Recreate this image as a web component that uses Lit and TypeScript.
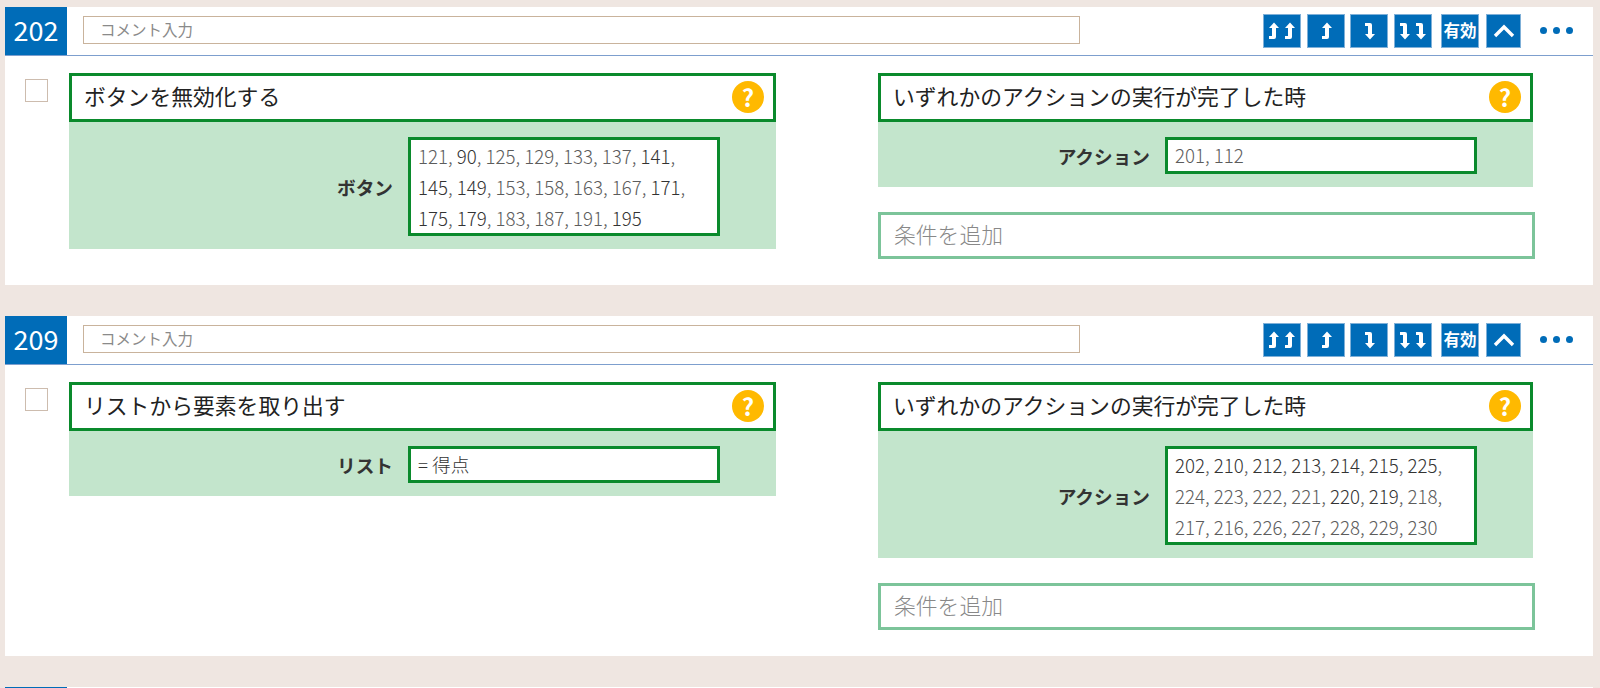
import { LitElement, html, css, svg } from "lit";
import { customElement } from "lit/decorators.js";

const up = (x: number) => svg`<path d="M${x - 5} 8 L${x} 2.5 L${x + 5} 8 H${x + 2} V17 a2 2 0 0 1 -2 2 H${x - 5} v-3 H${x - 2} V8 Z" fill="#fff"/>`;
const down = (x: number) => svg`<path d="M${x - 5} 14 L${x} 19.5 L${x + 5} 14 H${x + 2} V5 a2 2 0 0 0 -2 -2 H${x - 5} v3 H${x - 2} V14 Z" fill="#fff"/>`;

const icons = [
  svg`${up(11)}${up(27)}`,
  svg`${up(20)}`,
  svg`${down(20)}`,
  svg`${down(11)}${down(27)}`,
];

const dark = new Set(["90", "141", "145", "149", "171", "175", "179", "195", "202", "210", "212", "213", "214", "215", "225", "220", "219"]);

interface Field { label: string; lines: string[]; }
interface Clause { title: string; field: Field; }
interface Block { id: string; left: Clause; right: Clause; }

const blocks: Block[] = [
  {
    id: "202",
    left: {
      title: "ボタンを無効化する",
      field: {
        label: "ボタン",
        lines: [
          "121, 90, 125, 129, 133, 137, 141,",
          "145, 149, 153, 158, 163, 167, 171,",
          "175, 179, 183, 187, 191, 195",
        ],
      },
    },
    right: {
      title: "いずれかのアクションの実行が完了した時",
      field: { label: "アクション", lines: ["201, 112"] },
    },
  },
  {
    id: "209",
    left: {
      title: "リストから要素を取り出す",
      field: { label: "リスト", lines: ["= 得点"] },
    },
    right: {
      title: "いずれかのアクションの実行が完了した時",
      field: {
        label: "アクション",
        lines: [
          "202, 210, 212, 213, 214, 215, 225,",
          "224, 223, 222, 221, 220, 219, 218,",
          "217, 216, 226, 227, 228, 229, 230",
        ],
      },
    },
  },
];

@customElement("app-root")
export class AppRoot extends LitElement {
  static styles = css`
    :host {
      display: block;
      height: 688px;
      overflow: hidden;
      background: #efe6e1;
      padding: 7px 7px 0 5px;
      box-sizing: border-box;
      font-family: "Noto Sans CJK JP", "Noto Sans", sans-serif;
      color: #222;
    }
    .card { background: #fff; margin-bottom: 31px; padding-bottom: 26px; }
    .head {
      height: 49px;
      box-sizing: border-box;
      border-bottom: 1px solid #7d9fce;
      display: flex;
      align-items: flex-start;
    }
    .num {
      width: 62px;
      height: 48px;
      box-sizing: border-box;
      padding-bottom: 3px;
      background: #006cb8;
      color: #fff;
      font-size: 27px;
      display: flex;
      align-items: center;
      justify-content: center;
    }
    .comment {
      margin: 9px 0 0 16px;
      width: 997px;
      height: 28px;
      box-sizing: border-box;
      border: 1px solid #c9b39c;
      padding-left: 16px;
      font-size: 15.5px;
      line-height: 25px;
      color: #8a8a8a;
    }
    .tools { display: flex; margin: 7px 0 0 183px; align-items: flex-start; }
    .btn {
      width: 38px;
      height: 34px;
      margin-right: 5.5px;
      background: #006cb8;
      box-sizing: border-box;
      border: 1px solid #7fb0d8;
      display: flex;
      align-items: center;
      justify-content: center;
      color: #fff;
      font-size: 16.5px;
      font-weight: 700;
      padding-bottom: 2px;
    }
    .btn svg { width: 38px; height: 22px; flex: none; margin-top: 2px; }
    .btn.en { margin-left: 4px; margin-right: 7px; white-space: nowrap; }
    .btn.ch { width: 35px; margin-right: 19px; }
    .btn.ch svg { width: 22px; height: 14px; }
    .dots { display: flex; gap: 6px; margin-top: 13px; }
    .dots i { width: 7px; height: 7px; border-radius: 50%; background: #006cb8; display: block; }
    .body { display: flex; padding-top: 17px; }
    .check {
      width: 23px;
      height: 23px;
      box-sizing: border-box;
      border: 1px solid #cdbcae;
      margin: 6px 21px 0 20px;
      flex: none;
    }
    .col { flex: none; }
    .col.l { width: 707px; }
    .col.r { width: 655px; margin-left: 102px; }
    .title {
      height: 49px;
      box-sizing: border-box;
      border: 3px solid #0a8a2c;
      background: #fff;
      display: flex;
      align-items: center;
      justify-content: space-between;
      padding: 0 9px 0 12px;
      font-size: 21.8px;
    }
    .t { padding-bottom: 4px; }
    .q {
      width: 32px;
      height: 32px;
      margin-top: -1px;
      border-radius: 50%;
      background: #ffb900;
      color: #fff;
      font-weight: 700;
      font-size: 24px;
      line-height: 32px;
      text-align: center;
    }
    .fields {
      background: #c3e5cc;
      display: flex;
      justify-content: flex-end;
      align-items: center;
      padding: 15px 0 13px;
    }
    .label { font-size: 18.67px; font-weight: 700; margin-right: 15px; color: #333; }
    .val {
      width: 312px;
      box-sizing: border-box;
      border: 3px solid #0a8a2c;
      background: #fff;
      padding: 0 7px;
      font-size: 18.67px;
      font-weight: 300;
      line-height: 31px;
      color: #5c5c5c;
      white-space: nowrap;
      margin-right: 56px;
    }
    .val.one { line-height: 29px; padding-bottom: 2px; }
    .val b { font-weight: inherit; color: #333; }
    .add {
      margin-top: 25px;
      width: 657px;
      height: 47px;
      box-sizing: border-box;
      border: 3px solid #7cc49a;
      padding-left: 13px;
      font-size: 21.8px;
      line-height: 37px;
      font-weight: 300;
      color: #888;
      background: #fff;
    }
  `;

  private line(l: string) {
    if (!/^\d/.test(l)) return html`<div><b>${l}</b></div>`;
    const parts = l.split(/(\d+)/);
    return html`<div>${parts.map((p) => (dark.has(p) ? html`<b>${p}</b>` : p))}</div>`;
  }

  private clause(c: Clause) {
    return html`
      <div class="title"><span class="t">${c.title}</span><span class="q">?</span></div>
      <div class="fields">
        <span class="label">${c.field.label}</span>
        <div class="val ${c.field.lines.length === 1 ? "one" : ""}">${c.field.lines.map((l) => this.line(l))}</div>
      </div>`;
  }

  render() {
    return html`${blocks.map(
      (b) => html`
        <section class="card">
          <div class="head">
            <div class="num">${b.id}</div>
            <div class="comment">コメント入力</div>
            <div class="tools">
              ${icons.map((i) => html`<div class="btn"><svg viewBox="0 0 38 22">${i}</svg></div>`)}
              <div class="btn en">有効</div>
              <div class="btn ch"><svg viewBox="0 0 22 14"><path d="M2 12 L11 3 L20 12" fill="none" stroke="#fff" stroke-width="3.4"/></svg></div>
              <div class="dots"><i></i><i></i><i></i></div>
            </div>
          </div>
          <div class="body">
            <div class="check"></div>
            <div class="col l">${this.clause(b.left)}</div>
            <div class="col r">
              ${this.clause(b.right)}
              <div class="add">条件を追加</div>
            </div>
          </div>
        </section>`
    )}
    <section class="card"><div class="head"><div class="num"></div></div></section>`;
  }
}
